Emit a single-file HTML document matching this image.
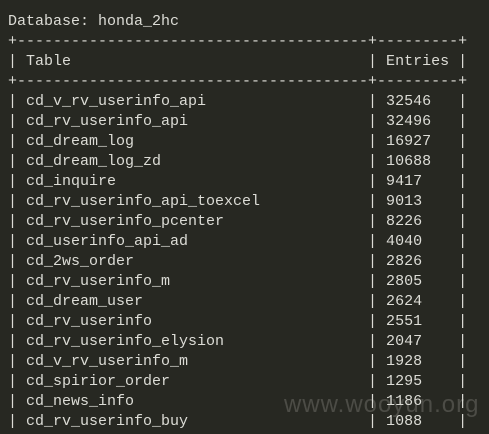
<!DOCTYPE html>
<html><head><meta charset="utf-8"><style>
html,body{margin:0;padding:0;background:#272822;width:489px;height:434px;overflow:hidden;}
pre{position:absolute;left:8px;top:12px;margin:0;font-family:"Liberation Mono",monospace;font-size:15px;line-height:20px;color:#dcdcd6;}
.wm{position:absolute;left:284px;top:391px;font-family:"Liberation Sans",sans-serif;font-size:24px;color:#4c4c46;letter-spacing:1px;}
</style></head><body>
<div class="wm">www.wooyun.org</div>
<pre>Database: honda_2hc
+---------------------------------------+---------+
| Table                                 | Entries |
+---------------------------------------+---------+
| cd_v_rv_userinfo_api                  | 32546   |
| cd_rv_userinfo_api                    | 32496   |
| cd_dream_log                          | 16927   |
| cd_dream_log_zd                       | 10688   |
| cd_inquire                            | 9417    |
| cd_rv_userinfo_api_toexcel            | 9013    |
| cd_rv_userinfo_pcenter                | 8226    |
| cd_userinfo_api_ad                    | 4040    |
| cd_2ws_order                          | 2826    |
| cd_rv_userinfo_m                      | 2805    |
| cd_dream_user                         | 2624    |
| cd_rv_userinfo                        | 2551    |
| cd_rv_userinfo_elysion                | 2047    |
| cd_v_rv_userinfo_m                    | 1928    |
| cd_spirior_order                      | 1295    |
| cd_news_info                          | 1186    |
| cd_rv_userinfo_buy                    | 1088    |</pre>
</body></html>
